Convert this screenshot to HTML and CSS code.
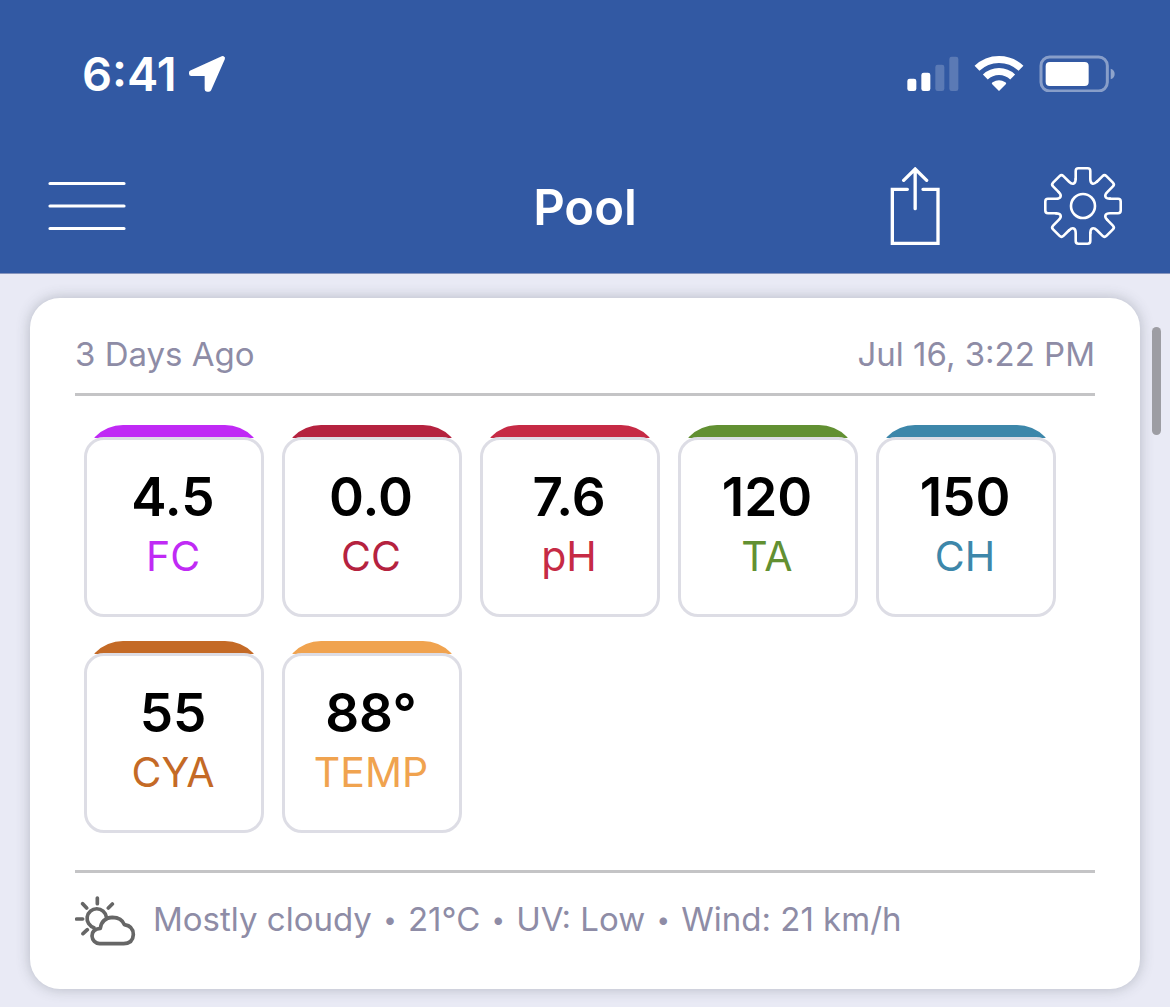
FILE: index.html
```html
<!DOCTYPE html>
<html lang="en">
<head>
<meta charset="utf-8">
<meta name="viewport" content="width=device-width, initial-scale=1">
<title>Pool</title>
<link rel="stylesheet" href="styles.css">
</head>
<body>
<header class="header">
  <div class="status">
    <div class="status-time">
      <span>6:41</span>
      <svg class="location" viewBox="384 48 114 114" aria-hidden="true"><path d="M488 58 L394 101 L394 104 L437 104 Q441 104 441 108 L441 151 L447 151 Z" fill="currentColor" stroke="currentColor" stroke-width="14" stroke-linejoin="round"/></svg>
    </div>
    <div class="status-icons">
      <svg class="signal" viewBox="50 45 156 111" aria-hidden="true">
        <g fill="currentColor">
          <rect x="51" y="116" width="27" height="37" rx="7"/>
          <rect x="93" y="98" width="27" height="55" rx="7"/>
          <rect x="135" y="74" width="27" height="79" rx="7" opacity=".2"/>
          <rect x="177" y="50" width="27" height="103" rx="7" opacity=".2"/>
        </g>
      </svg>
      <svg class="wifi" viewBox="252 45 150 111" aria-hidden="true">
        <g fill="none" stroke="currentColor" stroke-width="21">
          <path d="M261 85 A95 95 0 0 1 393 85"/>
          <path d="M286 111 A59 59 0 0 1 368 111"/>
        </g>
        <path d="M327 153 L306 132 Q304 129 308 127 Q327 115 346 127 Q350 129 348 132 Z" fill="currentColor"/>
      </svg>
      <svg class="battery" viewBox="448 45 228 111" aria-hidden="true">
        <rect x="454" y="51" width="199" height="102" rx="26" fill="none" stroke="currentColor" stroke-width="9" opacity=".42"/>
        <rect x="468" y="66" width="129" height="72" rx="12" fill="currentColor"/>
        <path d="M663 86 Q675 90 675 102 Q675 114 663 118 Z" fill="currentColor" opacity=".45"/>
      </svg>
    </div>
  </div>
  <nav class="nav">
    <button class="icon-button menu-button" type="button" aria-label="Menu">
      <svg class="menu" viewBox="0 0 78 78" aria-hidden="true"><path d="M2 16.500H76M2 39H76M2 61.500H76" fill="none" stroke="currentColor" stroke-width="3.200" stroke-linecap="round"/></svg>
    </button>
    <h1 class="title">Pool</h1>
    <div class="actions">
      <button class="icon-button" type="button" aria-label="Share">
        <svg class="share" viewBox="60 51 150 237" aria-hidden="true"><g fill="none" stroke="currentColor" stroke-width="10" stroke-linecap="round"><path d="M112 118H67V280H204V118H159"/><path d="M135.500 176V58M101 91L135.500 57L170 91"/></g></svg>
      </button>
      <button class="icon-button" type="button" aria-label="Settings">
        <svg class="gear" viewBox="-39 -39 78 78" aria-hidden="true">
          <defs><path id="tooth" d="M-7.300 -27V-35Q-7.300 -37.700 -4.600 -37.700H4.600Q7.300 -37.700 7.300 -35V-27C7.300 -22 10.400 -20.800 13.900 -24.300"/></defs>
          <g fill="none" stroke="currentColor" stroke-width="2.600" stroke-linecap="round">
            <use href="#tooth"/>
            <use href="#tooth" transform="rotate(45)"/>
            <use href="#tooth" transform="rotate(90)"/>
            <use href="#tooth" transform="rotate(135)"/>
            <use href="#tooth" transform="rotate(180)"/>
            <use href="#tooth" transform="rotate(225)"/>
            <use href="#tooth" transform="rotate(270)"/>
            <use href="#tooth" transform="rotate(315)"/>
            <circle r="12"/>
          </g>
        </svg>
      </button>
    </div>
  </nav>
</header>
<main class="content">
  <article class="card">
    <div class="card-head">
      <span>3 Days Ago</span>
      <time>Jul 16, 3:22 PM</time>
    </div>
    <ul class="tiles">
      <li class="tile fc"><div class="tile-box"><strong>4.5</strong><span>FC</span></div></li>
      <li class="tile cc"><div class="tile-box"><strong>0.0</strong><span>CC</span></div></li>
      <li class="tile ph"><div class="tile-box"><strong>7.6</strong><span>pH</span></div></li>
      <li class="tile ta"><div class="tile-box"><strong>120</strong><span>TA</span></div></li>
      <li class="tile ch"><div class="tile-box"><strong>150</strong><span>CH</span></div></li>
      <li class="tile cya"><div class="tile-box"><strong>55</strong><span>CYA</span></div></li>
      <li class="tile temp"><div class="tile-box"><strong>88°</strong><span>TEMP</span></div></li>
    </ul>
    <div class="weather">
      <svg class="weather-icon" viewBox="45 138 183 150" aria-hidden="true">
        <g fill="none" stroke="currentColor" stroke-width="11" stroke-linecap="round" stroke-linejoin="round">
          <path d="M112 144V161M68 161L80 174M157 162L145 174M50 207H68M69 251L82 239"/>
          <path d="M102 233A29 29 0 1 1 139 201"/>
          <path d="M119 281A24 24 0 0 1 96 258Q96 237 121 235Q125 204 157 202Q185 202 193 224Q220 228 220 254Q219 280 191 281Z"/>
        </g>
      </svg>
      <p class="weather-text">Mostly cloudy <span class="dot">•</span> 21°C <span class="dot">•</span> UV: Low <span class="dot">•</span> Wind: 21 km/h</p>
    </div>
  </article>
  <div class="scroll-thumb"></div>
</main>
</body>
</html>
```

FILE: styles.css
```css
* {
  box-sizing: border-box;
}

body {
  margin: 0;
  min-height: 100vh;
  background: #e9eaf5;
  font-family: Inter, "Liberation Sans", sans-serif;
  color: #000;
}

svg {
  display: block;
  flex: none;
}

.header {
  background: #3259a3;
  color: #fff;
  border-bottom: 1px solid #8795bd;
}

.status {
  display: flex;
  align-items: center;
  justify-content: space-between;
  height: 139px;
  padding: 8px 55px 0 82px;
}

.status-time {
  display: flex;
  align-items: center;
  gap: 11px;
  font-size: 47px;
  font-weight: 600;
  line-height: 56px;
}

.status-icons {
  display: flex;
  gap: 15px;
}

.location {
  width: 38px;
  height: 38px;
}

.signal {
  width: 52px;
  height: 37px;
}

.wifi {
  width: 50px;
  height: 37px;
}

.battery {
  width: 76px;
  height: 37px;
}

.nav {
  display: grid;
  grid-template-columns: 1fr auto 1fr;
  align-items: center;
  height: 134px;
  padding: 0 48px;
}

.icon-button {
  padding: 0;
  border: 0;
  background: none;
  color: inherit;
}

.menu-button {
  justify-self: start;
}

.menu,
.gear {
  width: 78px;
  height: 78px;
}

.share {
  width: 50px;
  height: 79px;
}

.title {
  margin: 0;
  padding-top: 4px;
  font-size: 49px;
  font-weight: 600;
  line-height: 60px;
}

.actions {
  display: flex;
  justify-content: flex-end;
  gap: 104px;
}

.content {
  position: relative;
  padding: 24px 30px 17px;
}

.card {
  padding: 36px 45px 43px;
  border-radius: 30px;
  background: #fff;
  box-shadow: 0 0 14px rgba(60, 70, 80, 0.3);
}

.card-head {
  display: flex;
  justify-content: space-between;
  padding-bottom: 19px;
  border-bottom: 3px solid #c4c4c6;
  color: #8e8ca6;
  font-size: 33px;
  line-height: 40px;
}

.tiles {
  display: flex;
  flex-wrap: wrap;
  gap: 24px 18px;
  margin: 0;
  padding: 29px 9px 37px;
  list-style: none;
}

.tile {
  width: 180px;
  padding-top: 12px;
  border-radius: 39px;
  background: linear-gradient(currentColor 13px, transparent 13px);
}

.tile-box {
  display: flex;
  flex-direction: column;
  align-items: center;
  height: 180px;
  padding: 25px 2px 0 0;
  border: 3px solid #dddde5;
  border-radius: 20px;
  background: #fff;
}

.tile strong {
  color: #000;
  font-size: 53px;
  font-weight: 600;
  line-height: 64px;
}

.tile span {
  font-size: 41px;
  line-height: 54px;
}

.fc { color: #c02af5; }
.cc { color: #b5223f; }
.ph { color: #c62a45; }
.ta { color: #629032; }
.ch { color: #3d87aa; }
.cya { color: #c46a26; }
.temp { color: #f0a34f; }

.weather {
  display: flex;
  align-items: flex-start;
  gap: 17px;
  padding-top: 23px;
  border-top: 3px solid #c4c4c6;
  color: #8e8ca6;
  font-size: 33px;
  line-height: 46px;
}

.weather-text {
  margin: 0;
}

.dot {
  margin: 0 2px;
  font-size: 24px;
  line-height: 24px;
  vertical-align: 3px;
}

.weather-icon {
  width: 61px;
  height: 50px;
  color: #666;
}

.scroll-thumb {
  position: absolute;
  top: 53px;
  right: 9px;
  width: 9px;
  height: 108px;
  border-radius: 5px;
  background: #9d9da3;
}
```
